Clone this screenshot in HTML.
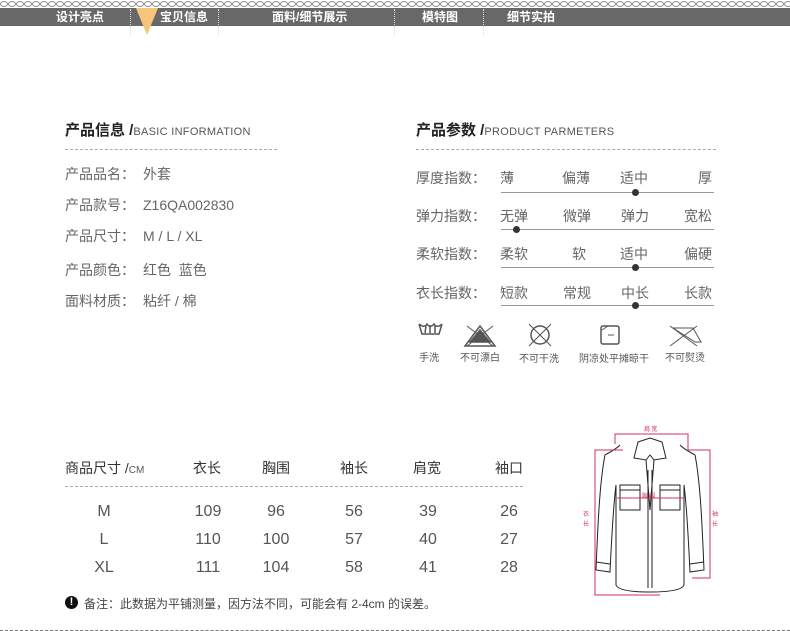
<!DOCTYPE html>
<html><head><meta charset="utf-8"><style>
*{margin:0;padding:0;box-sizing:border-box}
body{width:790px;height:631px;background:#fff;position:relative;overflow:hidden;font-family:"Liberation Sans","Noto Sans CJK SC",sans-serif;color:#555}
.a{position:absolute;white-space:nowrap}
.bar{position:absolute;left:0;top:8px;width:790px;height:18px;background:#686868}
.nav{position:absolute;top:8px;height:18px;line-height:18px;color:#fff;font-size:12px;font-weight:bold}
.sep{position:absolute;top:9px;height:26px;border-left:1px dotted #ddd}
.t{font-size:15px;font-weight:bold;color:#222}
.t span{font-size:11px;font-weight:normal;color:#555;letter-spacing:.3px}
.dash{position:absolute;height:0;border-top:1px dashed #aaa}
.r{font-size:14px;color:#666}
.r b{display:inline-block;width:78px;font-weight:normal}
.ln{position:absolute;height:1px;background:#999;width:213px;left:501px}
.dot{position:absolute;width:7px;height:7px;border-radius:50%;background:#333}
.ic{font-size:10px;color:#555}
.h{font-size:14px;color:#333}
.n{font-size:16px;color:#555;text-align:center;width:50px}
</style></head><body>
<svg class="a" style="left:0;top:0" width="790" height="8"><defs><pattern id="p" width="8" height="8" patternUnits="userSpaceOnUse"><ellipse cx="4" cy="4" rx="3.5" ry="2.5" fill="none" stroke="#888" stroke-width="1"/></pattern></defs><rect width="790" height="8" fill="url(#p)"/></svg>
<div class="bar"></div>
<div class="nav" style="left:56px">设计亮点</div>
<div class="sep" style="left:130px"></div>
<svg class="a" style="left:136px;top:8px" width="24" height="28"><polygon points="0,0 22,0 11,27" fill="#f5c67a"/></svg>
<div class="nav" style="left:160px">宝贝信息</div>
<div class="sep" style="left:218px"></div>
<div class="nav" style="left:272px">面料/细节展示</div>
<div class="sep" style="left:394px"></div>
<div class="nav" style="left:422px">模特图</div>
<div class="sep" style="left:483px"></div>
<div class="nav" style="left:507px">细节实拍</div>

<div class="a t" style="left:65px;top:119px">产品信息 /<span>BASIC INFORMATION</span></div>
<div class="dash" style="left:65px;top:149px;width:212px"></div>
<div class="a r" style="left:65px;top:164px"><b>产品品名：</b>外套</div>
<div class="a r" style="left:65px;top:195px"><b>产品款号：</b>Z16QA002830</div>
<div class="a r" style="left:65px;top:226px"><b>产品尺寸：</b>M / L / XL</div>
<div class="a r" style="left:65px;top:260px"><b>产品颜色：</b>红色&nbsp; 蓝色</div>
<div class="a r" style="left:65px;top:291px"><b>面料材质：</b>粘纤 / 棉</div>

<div class="a t" style="left:416px;top:119px">产品参数 /<span>PRODUCT PARMETERS</span></div>
<div class="dash" style="left:416px;top:149px;width:300px"></div>
<div class="a r" style="left:416px;top:168px">厚度指数：</div>
<div class="a r" style="left:500px;top:168px">薄</div><div class="a r" style="left:562px;top:168px">偏薄</div><div class="a r" style="left:620px;top:168px">适中</div><div class="a r" style="left:698px;top:168px">厚</div>
<div class="ln" style="top:192px"></div><div class="dot" style="left:632px;top:189px"></div>
<div class="a r" style="left:416px;top:206px">弹力指数：</div>
<div class="a r" style="left:500px;top:206px">无弹</div><div class="a r" style="left:563px;top:206px">微弹</div><div class="a r" style="left:621px;top:206px">弹力</div><div class="a r" style="left:684px;top:206px">宽松</div>
<div class="ln" style="top:229px"></div><div class="dot" style="left:513px;top:226px"></div>
<div class="a r" style="left:416px;top:244px">柔软指数：</div>
<div class="a r" style="left:500px;top:244px">柔软</div><div class="a r" style="left:572px;top:244px">软</div><div class="a r" style="left:620px;top:244px">适中</div><div class="a r" style="left:684px;top:244px">偏硬</div>
<div class="ln" style="top:267px"></div><div class="dot" style="left:632px;top:264px"></div>
<div class="a r" style="left:416px;top:283px">衣长指数：</div>
<div class="a r" style="left:500px;top:283px">短款</div><div class="a r" style="left:563px;top:283px">常规</div><div class="a r" style="left:621px;top:283px">中长</div><div class="a r" style="left:684px;top:283px">长款</div>
<div class="ln" style="top:305px"></div><div class="dot" style="left:632px;top:302px"></div>

<svg class="a" style="left:405px;top:320px" width="320" height="30" fill="none" stroke="#555" stroke-width="1.5">
<path d="M14 4 L17 14 L34 14 L37 4 M14 4 C18 7 20 7 22 4 C24 7 27 7 29 4 C31 7 34 7 37 4 M20 13 L21 6 M25 13 L25 5 M30 13 L30 6"/>
<path d="M60 26 L75 6 L90 26 Z M64 22 L86 22" stroke-width="1.5"/><polygon points="66,21 75,10 84,21" fill="#555"/><path d="M62 6 L88 26 M88 6 L62 26" stroke-width="1"/>
<circle cx="135" cy="15" r="9"/><path d="M124 4 L146 26 M146 4 L124 26" stroke-width="1"/>
<rect x="196" y="6" width="18" height="18" rx="2"/><path d="M203 15 L209 15 M197 10 L203 6" stroke-width="1"/>
<path d="M268 8 L290 22 L296 22 L288 8 Z" stroke-width="1"/><path d="M265 6 L292 26 M292 6 L265 26" stroke-width="1"/>
</svg>
<div class="a ic" style="left:419px;top:349px">手洗</div>
<div class="a ic" style="left:460px;top:349px">不可漂白</div>
<div class="a ic" style="left:519px;top:350px">不可干洗</div>
<div class="a ic" style="left:579px;top:350px">阴凉处平摊晾干</div>
<div class="a ic" style="left:665px;top:349px">不可熨烫</div>

<div class="a h" style="left:65px;top:458px">商品尺寸 /<span style="font-size:10px;color:#555">CM</span></div>
<div class="a h" style="left:193px;top:458px">衣长</div>
<div class="a h" style="left:262px;top:458px">胸围</div>
<div class="a h" style="left:340px;top:458px">袖长</div>
<div class="a h" style="left:413px;top:458px">肩宽</div>
<div class="a h" style="left:495px;top:458px">袖口</div>
<div class="dash" style="left:65px;top:486px;width:458px"></div>
<div class="a n" style="left:79px;top:503px">M</div><div class="a n" style="left:183px;top:503px">109</div><div class="a n" style="left:251px;top:503px">96</div><div class="a n" style="left:329px;top:503px">56</div><div class="a n" style="left:403px;top:503px">39</div><div class="a n" style="left:484px;top:503px">26</div>
<div class="a n" style="left:79px;top:531px">L</div><div class="a n" style="left:183px;top:531px">110</div><div class="a n" style="left:251px;top:531px">100</div><div class="a n" style="left:329px;top:531px">57</div><div class="a n" style="left:403px;top:531px">40</div><div class="a n" style="left:484px;top:531px">27</div>
<div class="a n" style="left:79px;top:559px">XL</div><div class="a n" style="left:183px;top:559px">111</div><div class="a n" style="left:251px;top:559px">104</div><div class="a n" style="left:329px;top:559px">58</div><div class="a n" style="left:403px;top:559px">41</div><div class="a n" style="left:484px;top:559px">28</div>
<div class="a" style="left:65px;top:596px;width:13px;height:13px;border-radius:50%;background:#111;color:#fff;font-size:11px;font-weight:bold;text-align:center;line-height:13px">!</div>
<div class="a" style="left:84px;top:595px;font-size:12px;color:#444">备注：此数据为平铺测量，因方法不同，可能会有 2-4cm 的误差。</div>
<div class="dash" style="left:0;top:630px;width:790px;border-top:1px dashed #777"></div>

<svg class="a" style="left:570px;top:410px" width="160" height="190" fill="none" stroke="#222" stroke-width="1">
<path d="M50 35 C45 40 40 42 35 45 C30 70 28 110 26 160 L40 162 C42 120 44 90 46 75 L46 175 C48 180 60 182 80 182 C100 182 112 180 114 175 L114 75 C116 90 118 120 120 162 L134 160 C132 110 130 70 125 45 C120 42 115 40 110 35"/>
<path d="M68 32 L80 28 L92 32 L96 48 L84 50 L80 45 L76 50 L64 48 Z M76 50 L80 100 L84 50 M78 60 L78 178 M82 60 L82 178"/>
<path d="M50 75 L70 75 L70 100 L50 100 Z M90 75 L110 75 L110 100 L90 100 Z M50 80 L70 80 M90 80 L110 80"/>
<path d="M26 152 L40 154 M120 154 L134 152"/>
<g stroke="#d3335a" stroke-width="1"><path d="M45 34 L45 24 L118 24 L118 40 M118 40 L140 40 L140 168 L122 168 M53 40 L25 40 L25 185 L90 185 M47 88 L114 88"/></g>
<g fill="#d3335a" font-size="6" font-family="Noto Sans CJK SC,sans-serif" stroke="none"><text x="74" y="21">肩 宽</text><text x="72" y="88">胸 围</text><text x="13" y="106">衣</text><text x="13" y="116">长</text><text x="142" y="106">袖</text><text x="142" y="116">长</text></g>
</svg>
</body></html>
